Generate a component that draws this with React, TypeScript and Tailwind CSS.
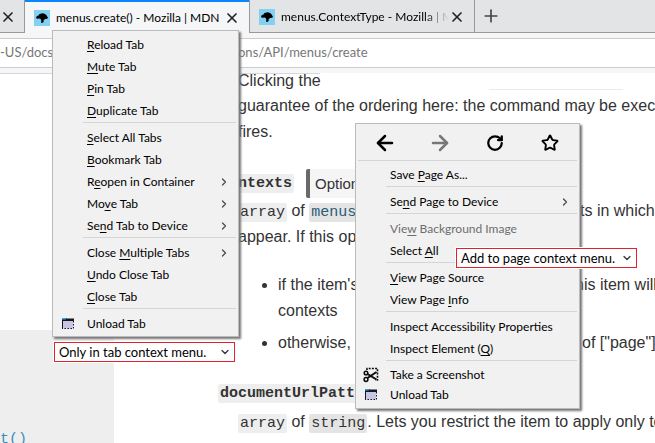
import React from 'react';
import { ArrowLeft, ArrowRight, ChevronDown, ChevronRight, Plus, RotateCw, Star, X } from 'lucide-react';

type Entry = {
  label: string;
  accessKey?: number;
  submenu?: boolean;
  disabled?: boolean;
  icon?: 'window' | 'scissors';
  compact?: boolean;
};

const tabMenu: Entry[][] = [
  [
    { label: 'Reload Tab', accessKey: 0 },
    { label: 'Mute Tab', accessKey: 0 },
    { label: 'Pin Tab', accessKey: 0 },
    { label: 'Duplicate Tab', accessKey: 0 },
  ],
  [
    { label: 'Select All Tabs', accessKey: 0 },
    { label: 'Bookmark Tab', accessKey: 0 },
    { label: 'Reopen in Container', accessKey: 1, submenu: true },
    { label: 'Move Tab', accessKey: 2, submenu: true },
    { label: 'Send Tab to Device', accessKey: 2, submenu: true },
  ],
  [
    { label: 'Close Multiple Tabs', accessKey: 6, submenu: true },
    { label: 'Undo Close Tab', accessKey: 0 },
    { label: 'Close Tab', accessKey: 0 },
  ],
  [{ label: 'Unload Tab', icon: 'window' }],
];

const pageMenu: Entry[][] = [
  [{ label: 'Save Page As...', accessKey: 5 }],
  [{ label: 'Send Page to Device', accessKey: 2, submenu: true }],
  [
    { label: 'View Background Image', accessKey: 3, disabled: true },
    { label: 'Select All', accessKey: 7 },
  ],
  [
    { label: 'View Page Source', accessKey: 0 },
    { label: 'View Page Info', accessKey: 10 },
  ],
  [{ label: 'Inspect Accessibility Properties' }, { label: 'Inspect Element (Q)', accessKey: 17 }],
  [
    { label: 'Take a Screenshot', icon: 'scissors', compact: true },
    { label: 'Unload Tab', icon: 'window', compact: true },
  ],
];

function WindowIcon() {
  return (
    <svg width="14" height="14" viewBox="0 0 14 14" aria-hidden="true">
      <path d="M1 2.5h11v9H1z" fill="#c9c3e6" />
      <path d="M1 1h5v2H1z" fill="#2ca5dc" />
      <path d="M5 1.5h8v2.5H1V2.5h4z" fill="#14181f" />
      <path d="M1.5 3v9" stroke="#14181f" />
      <path d="M12.5 4v7.500H2" fill="none" stroke="#14181f" strokeDasharray="1.500 1.500" />
    </svg>
  );
}

function ScissorsIcon() {
  return (
    <svg width="16" height="16" viewBox="0 0 16 16" fill="none" stroke="#0c0c0d" aria-hidden="true">
      <path d="M4 3V1.500h10.500V13H12" strokeWidth="1.600" strokeDasharray="2 1.200" />
      <path d="M4.500 7l9 5.500M4.500 11l9-6" strokeWidth="2" />
      <circle cx="3" cy="6" r="1.800" strokeWidth="1.500" />
      <circle cx="3" cy="12.500" r="1.900" strokeWidth="1.500" />
    </svg>
  );
}

function MenuItem({ item }: { item: Entry }) {
  const k = item.accessKey;
  return (
    <button
      type="button"
      role="menuitem"
      disabled={item.disabled}
      className={`flex w-full items-center text-left text-xs ${item.compact ? 'h-5' : 'h-[22px]'} ${item.disabled ? 'text-[#6d6d6d]' : 'text-black'}`}
    >
      <span className="flex w-[34px] shrink-0 justify-center pr-1">
        {item.icon === 'window' && <WindowIcon />}
        {item.icon === 'scissors' && <ScissorsIcon />}
      </span>
      <span className="grow whitespace-nowrap">
        {k === undefined ? (
          item.label
        ) : (
          <>
            {item.label.slice(0, k)}
            <u className="underline-offset-2">{item.label[k]}</u>
            {item.label.slice(k + 1)}
          </>
        )}
      </span>
      {item.submenu && <ChevronRight size={12} strokeWidth={2.5} className="mr-2 shrink-0 text-[#4a4a4a]" />}
    </button>
  );
}

function MenuGroups({ groups }: { groups: Entry[][] }) {
  return (
    <>
      {groups.map((group, i) => (
        <React.Fragment key={i}>
          {i > 0 && <div role="separator" className="mr-0.5 ml-[30px] h-[5px] border-t border-[#d5d5d5]" />}
          {group.map((item) => (
            <MenuItem key={item.label} item={item} />
          ))}
        </React.Fragment>
      ))}
    </>
  );
}

function NoteSelect({ text }: { text: string }) {
  return (
    <div className="relative flex h-5 w-[181px] items-center border border-[#e0222c] bg-white outline outline-white">
      <select
        aria-label={text}
        className="h-full w-full appearance-none bg-transparent pl-1 text-[13px] leading-4 whitespace-nowrap text-black"
      >
        <option>{text}</option>
      </select>
      <ChevronDown size={12} strokeWidth={2.5} className="pointer-events-none absolute right-[3px] text-[#333]" />
    </div>
  );
}

function Favicon() {
  return (
    <svg width="16" height="16" viewBox="0 0 16 16" className="shrink-0" aria-hidden="true">
      <path fill="#83d0f2" d="M0 0h16v16H0z" />
      <path
        fill="#000"
        d="M2 7.500 3 6l1.500-.5L5.500 4l2-.5L9 3.300l2.500 1L13 6l1 2-1 .8-2 .2-1.500 1.500.2 1.500L8 13l-1-.500.300-2.500L6 8.500 4 8.800 2.500 8.500z"
      />
    </svg>
  );
}

function CloseButton() {
  return (
    <button type="button" aria-label="Close tab" className="shrink-0">
      <X size={16} strokeWidth={2.5} className="text-[#222]" />
    </button>
  );
}

function Code({ children, bold, type, link }: { children: string; bold?: boolean; type?: boolean; link?: boolean }) {
  return (
    <code
      className={`inline-block rounded-xs px-0.5 font-['Liberation_Mono',monospace] text-[15px] leading-[19px] ${bold ? 'font-bold' : ''} ${type ? 'bg-[#e4e4e4]' : 'bg-[#eeeeee]'} ${link ? 'text-[#285c76]' : ''}`}
    >
      {children}
    </code>
  );
}

export default function App() {
  return (
    <div className="relative flex min-h-screen w-full flex-col overflow-hidden bg-white font-['Lato','Open_Sans',sans-serif] text-xs text-black">
      <header>
        <div className="flex h-[33px] bg-[#e3e4e6]">
          <div className="flex w-[25px] shrink-0 items-center border-r border-b border-[#999] pt-0.5">
            <CloseButton />
          </div>
          <div className="flex w-56 shrink-0 items-center border-t-2 border-[#0a84ff] bg-[#f5f6f7] pl-[9px]">
            <Favicon />
            <span className="ml-1.5 w-[168px] shrink-0 whitespace-nowrap">menus.create() - Mozilla | MDN</span>
            <CloseButton />
          </div>
          <div className="flex w-[226px] shrink-0 items-center border-x border-b border-[#999] pt-0.5 pl-[9px]">
            <Favicon />
            <span className="ml-1.5 w-[168px] shrink-0 overflow-hidden mask-r-from-85% mask-r-to-100% whitespace-nowrap">
              menus.ContextType - Mozilla | MDN
            </span>
            <CloseButton />
          </div>
          <div className="flex grow items-center border-b border-[#999] pl-1.5">
            <button type="button" aria-label="New tab">
              <Plus size={20} strokeWidth={2} className="text-[#444]" />
            </button>
          </div>
        </div>
        <div className="h-10 bg-[#f5f6f7] py-[5px]">
          <div className="flex h-[30px] items-center border-y border-[#ccc] bg-white text-[13px] text-[#777]">
            <label htmlFor="address" className="sr-only">Address</label>
            <span className="w-[238px] shrink-0 whitespace-nowrap">-US/docs/Mozilla/Add-ons</span>
            <input id="address" className="w-full bg-transparent" defaultValue="ons/API/menus/create" />
          </div>
        </div>
      </header>

      <div className="flex grow">
        <aside className="flex w-[114px] shrink-0 flex-col border-t border-[#d7d7db] pt-64">
          <div className="flex grow flex-col justify-end bg-[#eee]">
            <a href="#reset" className="font-['Liberation_Mono',monospace] text-[15px] leading-[6px] text-[#3d8fb8]">t()</a>
          </div>
        </aside>
        <main className="min-w-0 grow pl-[104px] font-['Liberation_Sans',sans-serif] text-base leading-[26px] whitespace-nowrap text-[#333]">
          <div className="pl-5">
            <div className="mb-1 flex h-4 items-start leading-[13px]">
              <span className="mr-[169px] w-[82px] shrink-0 border-t border-[#d7d7db]">Clicking the</span>
              <span className="mt-4 h-px w-[134px] bg-[#eaeaea]" />
            </div>
            <p>guarantee of the ordering here: the command may be executed</p>
            <p>fires.</p>
          </div>
          <dl>
            <dt className="mt-6 flex h-[29px] items-center gap-3">
              <Code bold>contexts</Code>
              <span className="h-full rounded-l-xs border-l-4 border-[#696969] bg-[#f5f5f5] px-[5px] text-[15px] leading-[29px]">Optional</span>
            </dt>
            <dd className="pl-5">
              <div className="flex">
                <span className="w-[342px] shrink-0">
                  <Code>array</Code> of <Code type link>menus.ContextType</Code>
                </span>
                <span>ts in which</span>
              </div>
              <p>appear. If this option is omitted:</p>
              <ul className="mt-[22px] list-disc pl-10">
                <li>
                  <div className="flex">
                    <span className="w-[297px] shrink-0">if the item's parent has contexts</span>
                    <span>his item will inherit</span>
                  </div>
                  contexts
                </li>
                <li className="mt-1.5">
                  <div className="flex">
                    <span className="w-[304px] shrink-0">otherwise, the item is given</span>
                    <span>of ["page"].</span>
                  </div>
                </li>
              </ul>
            </dd>
            <dt className="mt-7 flex h-[19px]">
              <Code bold>documentUrlPatterns</Code>
            </dt>
            <dd className="mt-1.5 pl-5">
              <Code>array</Code> of <Code type>string</Code>. Lets you restrict the item to apply only to
            </dd>
          </dl>
        </main>
      </div>

      <div
        role="menu"
        aria-label="Tab"
        className="absolute top-[30px] left-[52px] w-[187px] border border-[#bbb] bg-[#f1f1f1] pt-[3px] pb-px shadow-[2px_2px_2px_#777]"
      >
        <MenuGroups groups={tabMenu} />
      </div>
      <div className="absolute top-[342px] left-[54px]">
        <NoteSelect text="Only in tab context menu." />
      </div>

      <div
        role="menu"
        aria-label="Page"
        className="absolute top-[123px] left-[355px] w-[225px] border border-[#bbb] bg-[#f1f1f1] pb-[3px] shadow-[2px_2px_2px_#777]"
      >
        <div className="mx-0.5 mb-[3px] grid h-[37px] grid-cols-4 place-items-center border-b border-[#d5d5d5] pt-0.5">
          <button type="button" aria-label="Back"><ArrowLeft size={24} strokeWidth={2.5} /></button>
          <button type="button" aria-label="Forward" disabled className="text-[#777]"><ArrowRight size={24} strokeWidth={2.5} /></button>
          <button type="button" aria-label="Reload"><RotateCw size={18} strokeWidth={3} /></button>
          <button type="button" aria-label="Bookmark page"><Star size={18} strokeWidth={2.5} /></button>
        </div>
        <MenuGroups groups={pageMenu} />
      </div>
      <div className="absolute top-[248px] left-[456px]">
        <NoteSelect text="Add to page context menu." />
      </div>
    </div>
  );
}
